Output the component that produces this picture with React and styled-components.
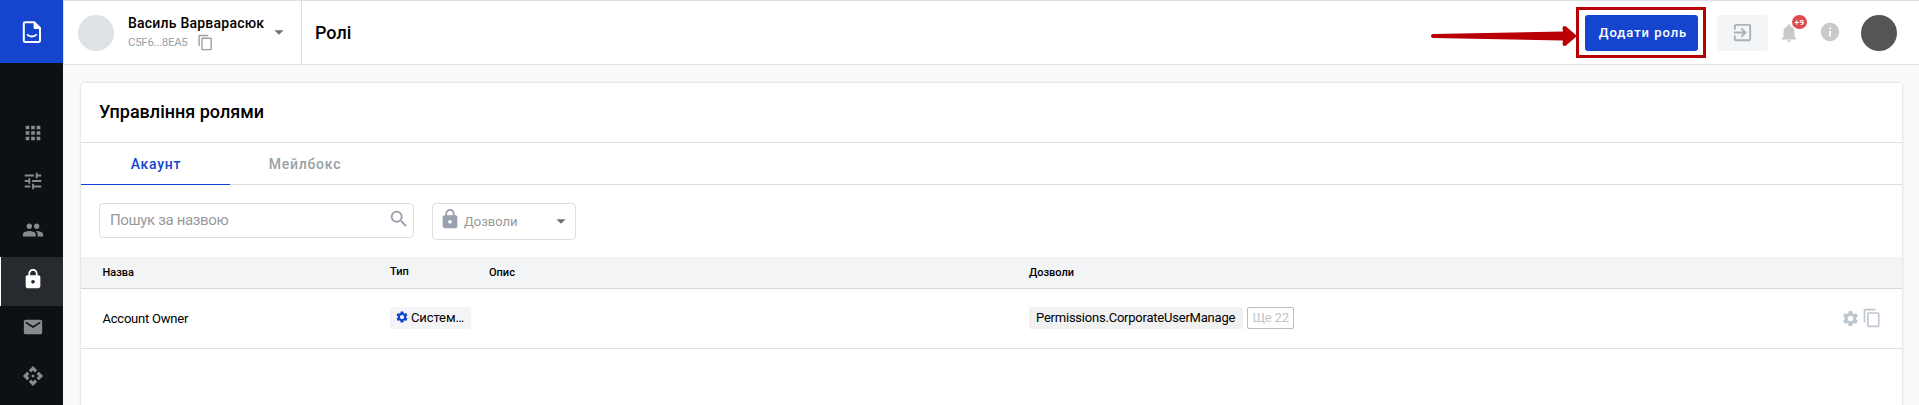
import React from "react";
import styled, { createGlobalStyle, css } from "styled-components";
import {
  MdApps, MdTune, MdPeople, MdLock, MdEmail, MdApi, MdContentCopy,
  MdArrowDropDown, MdExitToApp, MdNotifications, MdInfo, MdSearch, MdSettings,
} from "react-icons/md";

const GlobalStyle = createGlobalStyle`
  *, *::before, *::after { box-sizing: border-box; }
  body {
    margin: 0;
    background: #fafafa;
    color: #000;
    font-family: Roboto, "Noto Sans", sans-serif;
    font-size: 13px;
    overflow: hidden;
  }
  svg { display: block; flex: none; }
`;

const Page = styled.div`
  display: flex;
  height: 405px;
  overflow: hidden;
`;

const Sidebar = styled.nav`
  width: 63px;
  flex: none;
  background: #0d1014;
`;

const Logo = styled.div`
  height: 63px;
  margin-bottom: 48.5px;
  display: flex;
  justify-content: center;
  padding: 21px 0 0 1px;
  background: #1545ce;
`;

const NavItem = styled.a`
  display: flex;
  align-items: center;
  justify-content: center;
  height: 48.5px;
  padding: 0 0 6px 2px;
  color: #898b8d;
  ${(p) => p.$active && css`
    height: 49px;
    color: #fff;
    background: #272a2e;
    border-left: 1px solid #fff;
    padding-left: 1px;
  `}
`;

const Main = styled.div`
  flex: 1;
  min-width: 0;
`;

const Header = styled.header`
  display: flex;
  height: 65px;
  border: solid #dcdfe3;
  border-width: 1px 0 1px 1px;
  background: #fff;
`;

const Account = styled.div`
  display: flex;
  width: 238px;
  flex: none;
  padding: 14px 0 0 14px;
  border-right: 1px solid #dcdfe3;
`;

const Avatar = styled.div`
  width: 36px;
  height: 36px;
  flex: none;
  border-radius: 50%;
  background: ${(p) => p.$color};
`;

const AccountText = styled.div`
  width: 137px;
  margin-left: 14px;
`;

const AccountName = styled.div`
  font-size: 14px;
  font-weight: 500;
  line-height: 17px;
  letter-spacing: 0.22px;
  white-space: nowrap;
`;

const AccountId = styled.div`
  display: flex;
  align-items: flex-start;
  gap: 9px;
  color: #98a1a8;
  font-size: 11.5px;
  line-height: 20px;
  letter-spacing: -0.3px;
  svg { margin-top: 2px; }
`;

const Caret = styled(MdArrowDropDown)`
  color: #707070;
  margin: ${(p) => p.$margin};
`;

const PageTitle = styled.h1`
  flex: 1;
  margin: 0 0 0 13px;
  font-size: 18px;
  font-weight: 500;
  line-height: 64px;
`;

const HeaderActions = styled.div`
  display: flex;
  align-items: flex-start;
  padding: 14px 22px 0 0;
`;

const AddButton = styled.button`
  position: relative;
  width: 113px;
  height: 36px;
  margin-right: 19px;
  padding: 0 0 0 3px;
  border: 0;
  border-radius: 3px;
  background: #1545ce;
  color: #fff;
  font: 500 13px/36px Roboto, "Noto Sans", sans-serif;
  letter-spacing: 0.95px;
`;

const Highlight = styled.span`
  position: absolute;
  inset: -8px -8px -7px -9px;
  border: 3px solid #b90005;
  pointer-events: none;
`;

const Arrow = styled.svg`
  position: absolute;
  top: 10px;
  left: -155px;
`;

const ExitButton = styled.button`
  display: flex;
  align-items: center;
  justify-content: center;
  width: 51px;
  height: 36px;
  padding: 0 0 1px;
  border: 0;
  border-radius: 4px;
  background: #f3f5f7;
  color: #a9b2ba;
`;

const IconSlot = styled.div`
  position: relative;
  margin: ${(p) => p.$margin};
  color: #c9c9c9;
`;

const Counter = styled.span`
  position: absolute;
  top: -7px;
  left: 14px;
  width: 15px;
  height: 14px;
  border-radius: 50%;
  background: #e04b4b;
  color: #fff;
  font-size: 8px;
  font-weight: 700;
  line-height: 15px;
  letter-spacing: 0.6px;
  text-align: center;
`;

const Card = styled.section`
  width: 1821px;
  height: 340px;
  margin: 18px 0 0 18px;
  border-radius: 4px;
  background: #fff;
  box-shadow: 0 0 3px rgba(0, 0, 0, 0.2);
`;

const CardTitle = styled.h2`
  height: 60px;
  margin: 0;
  padding-left: 18px;
  border-bottom: 1px solid #e0e0e0;
  font-size: 18px;
  font-weight: 500;
  line-height: 58px;
`;

const Tabs = styled.div`
  display: flex;
  height: 42px;
  border-bottom: 1px solid #dcdee1;
`;

const Tab = styled.button`
  width: 149px;
  height: 42px;
  padding: 0 0 0 1px;
  border: 0;
  border-bottom: 1px solid ${(p) => (p.$active ? "#1545ce" : "transparent")};
  background: none;
  color: ${(p) => (p.$active ? "#1545ce" : "#98a1a8")};
  font: 500 14px/42px Roboto, "Noto Sans", sans-serif;
  letter-spacing: 0.75px;
`;

const Filters = styled.div`
  display: flex;
  align-items: flex-start;
  gap: 18px;
  height: 72px;
  padding: 18px 18px 0;
`;

const SearchField = styled.label`
  display: flex;
  justify-content: space-between;
  width: 315px;
  height: 35px;
  padding: 0 3px 0 10px;
  border: 1px solid #dedede;
  border-radius: 4px;
  color: #999;
  font-size: 15px;
  line-height: 33px;
  letter-spacing: -0.35px;
  svg { margin-top: 4px; color: #98a1ad; }
`;

const SelectField = styled.div`
  display: flex;
  width: 144px;
  height: 37px;
  padding-left: 6px;
  border: 1px solid #dedede;
  border-radius: 4px;
  color: #999;
  font-size: 13px;
  line-height: 36px;
`;

const SelectIcon = styled(MdLock)`
  margin-top: 4px;
  color: #98a1ad;
`;

const SelectLabel = styled.span`
  flex: 1;
  margin-left: 3px;
`;

const columns = css`
  display: grid;
  grid-template-columns: 287.5px 99px 540px 812px auto;
  padding-left: 21.5px;
`;

const TableHead = styled.div`
  ${columns}
  height: 32px;
  border-bottom: 1px solid #d5d7da;
  background: #f3f4f6;
  font-size: 11px;
  font-weight: 500;
  line-height: 31px;
`;

const HeadCell = styled.div`
  line-height: ${(p) => p.$line || 31}px;
`;

const TableRow = styled.div`
  ${columns}
  height: 60px;
  border-bottom: 1px solid #e0e0e0;
  font-size: 13px;
  line-height: 59px;
  letter-spacing: -0.22px;
`;

const Cell = styled.div`
  display: flex;
  align-items: center;
  gap: ${(p) => p.$gap || 0}px;
`;

const Chip = styled.span`
  display: flex;
  align-items: center;
  height: 22px;
  width: ${(p) => p.$width}px;
  padding-left: ${(p) => (p.$outlined ? 4.5 : 7)}px;
  margin-top: -1px;
  border-radius: 2px;
  line-height: 22px;
  white-space: nowrap;
  background: ${(p) => p.$bg || "transparent"};
  ${(p) => p.$outlined && css`
    border: 1px solid #b9bdc4;
    color: #c1c5cb;
  `}
`;

const TypeChip = styled(Chip)`
  padding-left: 4.5px;
  gap: 2.5px;
  letter-spacing: -0.1px;
  svg { color: #1545ce; margin-top: -3px; }
`;

const RowActions = styled(Cell)`
  color: #bec6cf;
  gap: 2px;
  padding-bottom: 1px;
`;

const navIcons = [MdApps, MdTune, MdPeople, MdLock, MdEmail, MdApi];

function LogoMark() {
  return (
    <svg width="20" height="23" viewBox="0 0 20 23" fill="none">
      <path
        d="M3 1.200h9.200L18 7v12.800a1.200 1.200 0 0 1-1.200 1.200H3a1.200 1.200 0 0 1-1.200-1.200V2.400A1.200 1.200 0 0 1 3 1.200Z"
        stroke="#fff" strokeWidth="2"
      />
      <path d="M11.600 1.200 18.500 8h-5.700a1.200 1.200 0 0 1-1.200-1.200Z" fill="#fff" />
      <path d="M5 13.400c2.800 2.800 7 2.800 9.800 0" stroke="#fff" strokeWidth="1.8" />
    </svg>
  );
}

export default function App() {
  return (
    <>
      <GlobalStyle />
      <Page>
        <Sidebar>
          <Logo><LogoMark /></Logo>
          {navIcons.map((Icon, i) => (
            <NavItem key={i} $active={i === 3}><Icon size={22} /></NavItem>
          ))}
        </Sidebar>
        <Main>
          <Header>
            <Account>
              <Avatar $color="#dee2e5" />
              <AccountText>
                <AccountName>Василь Варварасюк</AccountName>
                <AccountId>C5F6...8EA5 <MdContentCopy size={17} /></AccountId>
              </AccountText>
              <Caret size={22} $margin="6px 0 0 3px" />
            </Account>
            <PageTitle>Ролі</PageTitle>
            <HeaderActions>
              <AddButton>
                Додати роль
                <Highlight />
                <Arrow width="148" height="22" viewBox="0 0 148 22">
                  <path
                    d="M3 9 133 6.500 132.500 3Q133 0 136 1.500L147 11 136 20.500Q133 22 132.500 19L133 15.500 3 13Q1 13 1 11T3 9Z"
                    fill="#b90005"
                  />
                </Arrow>
              </AddButton>
              <ExitButton><MdExitToApp size={23} /></ExitButton>
              <IconSlot $margin="7px 0 0 10px">
                <MdNotifications size={22} />
                <Counter>+9</Counter>
              </IconSlot>
              <IconSlot $margin="6px 20px 0 19px"><MdInfo size={22} /></IconSlot>
              <Avatar $color="#555" />
            </HeaderActions>
          </Header>
          <Card>
            <CardTitle>Управління ролями</CardTitle>
            <Tabs>
              <Tab $active>Акаунт</Tab>
              <Tab>Мейлбокс</Tab>
            </Tabs>
            <Filters>
              <SearchField>Пошук за назвою <MdSearch size={22} /></SearchField>
              <SelectField>
                <SelectIcon size={22} />
                <SelectLabel>Дозволи</SelectLabel>
                <Caret size={22} $margin="6px 3px 0 0" />
              </SelectField>
            </Filters>
            <TableHead>
              <HeadCell>Назва</HeadCell>
              <HeadCell $line={29}>Тип</HeadCell>
              <HeadCell>Опис</HeadCell>
              <HeadCell>Дозволи</HeadCell>
            </TableHead>
            <TableRow>
              <Cell>Account Owner</Cell>
              <Cell>
                <TypeChip $bg="#f3f4f6" $width={81}><MdSettings size={14} />Систем…</TypeChip>
              </Cell>
              <Cell />
              <Cell $gap={4}>
                <Chip $bg="#f1f1f1" $width={214}>Permissions.CorporateUserManage</Chip>
                <Chip $outlined $width={47}>Ще 22</Chip>
              </Cell>
              <RowActions>
                <MdSettings size={19} />
                <MdContentCopy size={20} />
              </RowActions>
            </TableRow>
          </Card>
        </Main>
      </Page>
    </>
  );
}
